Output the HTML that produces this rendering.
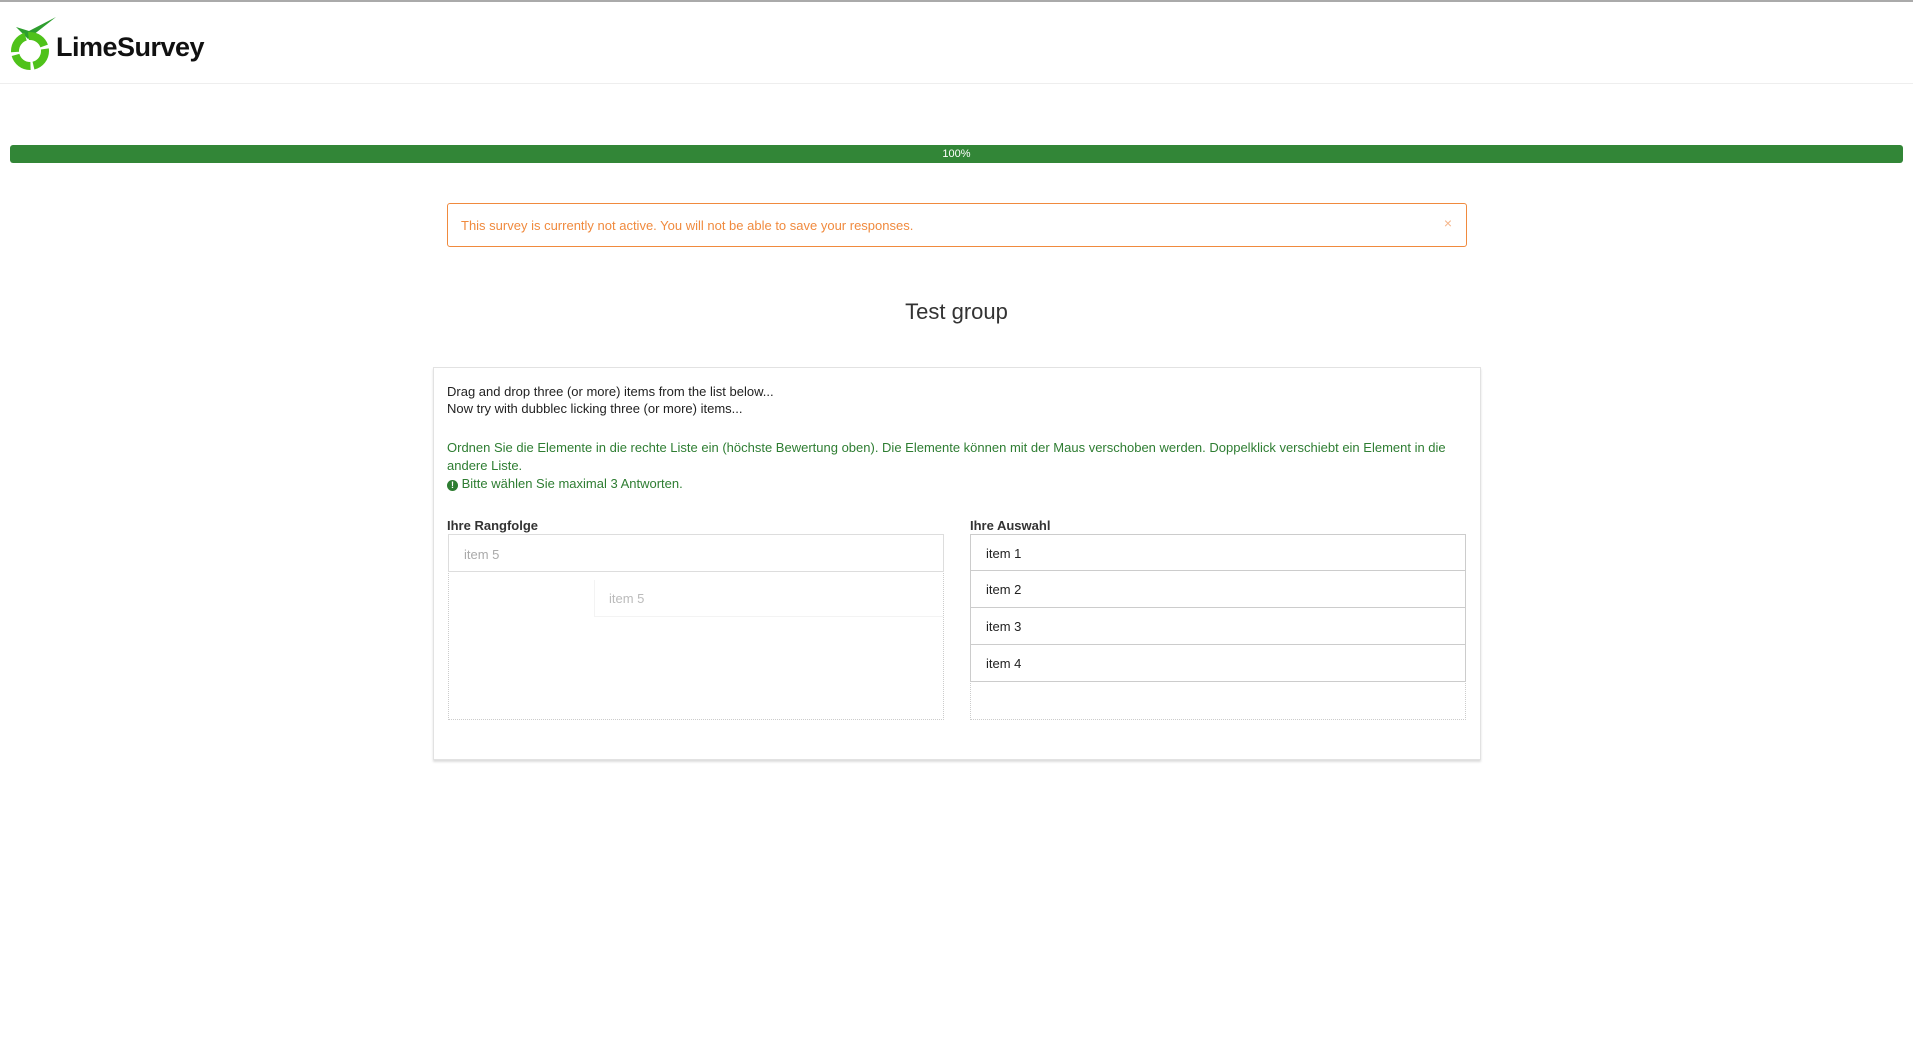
<!DOCTYPE html>
<html><head><meta charset="utf-8"><style>
*{box-sizing:border-box;margin:0;padding:0}
body{width:1913px;height:1041px;background:#fff;font-family:"Liberation Sans",sans-serif;position:relative;overflow:hidden;color:#333}
.abs{position:absolute}
</style></head><body>
<div class="abs" style="left:0;top:0;width:1913px;height:2px;background:#aaa"></div>
<div class="abs" style="left:0;top:83px;width:1913px;height:1px;background:#eee"></div>
<svg class="abs" style="left:8px;top:15px" width="52" height="56" viewBox="0 0 52 56">
<path d="M8 12 L20 24 L48 2 L21 16 Z" fill="#2e9e2e"/>
<circle cx="22" cy="36" r="15" fill="none" stroke="#4fc21a" stroke-width="8" stroke-dasharray="20 3"/>
</svg>
<div class="abs" style="left:56px;top:32px;font-size:27px;color:#111;font-weight:bold;letter-spacing:-0.5px">LimeSurvey</div>
<div class="abs" style="left:10px;top:145px;width:1893px;height:18px;background:#328637;border-radius:3px;color:#fff;font-size:11px;text-align:center;line-height:18px">100%</div>
<div class="abs" style="left:447px;top:203px;width:1020px;height:44px;border:1px solid #f08a3e;border-radius:3px;color:#f08a3e;font-size:13px;padding:14px 0 0 13px">This survey is currently not active. You will not be able to save your responses.<span style="position:absolute;right:14px;top:11px;color:#f5b58a;font-size:14px">×</span></div>
<div class="abs" style="left:0;width:1913px;top:299px;text-align:center;font-size:22px;color:#333">Test group</div>
<div class="abs" style="left:433px;top:367px;width:1048px;height:393px;border:1px solid #e2e2e2;box-shadow:0 2px 2px #ddd"></div>
<div class="abs" style="left:447px;top:383px;font-size:13px;line-height:17px;color:#222">Drag and drop three (or more) items from the list below...<br>Now try with dubblec licking three (or more) items...</div>
<div class="abs" style="left:447px;top:439px;width:1020px;font-size:13px;line-height:18px;color:#2e7d32">Ordnen Sie die Elemente in die rechte Liste ein (höchste Bewertung oben). Die Elemente können mit der Maus verschoben werden. Doppelklick verschiebt ein Element in die andere Liste.<br><span style="display:inline-block;width:11px;height:11px;border-radius:50%;background:#2e7d32;color:#fff;font-size:9px;text-align:center;line-height:11px;font-weight:bold">!</span> Bitte wählen Sie maximal 3 Antworten.</div>
<div class="abs" style="left:447px;top:518px;font-size:13px;font-weight:bold;color:#333">Ihre Rangfolge</div>
<div class="abs" style="left:970px;top:518px;font-size:13px;font-weight:bold;color:#333">Ihre Auswahl</div>
<div class="abs" style="left:448px;top:534px;width:496px;height:186px;border:1px dotted #ccc"></div>
<div class="abs" style="left:448px;top:534px;width:496px;height:38px;border:1px solid #ddd;color:#aaa;font-size:13px;padding:12px 15px">item 5</div>
<div class="abs" style="left:594px;top:580px;width:349px;height:37px;border-left:1px solid #f3f3f3;border-bottom:1px solid #f3f3f3;color:#bbb;font-size:13px;padding:11px 14px">item 5</div>
<div class="abs" style="left:970px;top:534px;width:496px;height:186px;border:1px dotted #ccc"></div>
<div class="abs" style="left:970px;top:534px;width:496px">
<div style="height:37px;border:1px solid #ccc;font-size:13px;padding:11px 15px;color:#222">item 1</div>
<div style="height:37px;border:1px solid #ccc;border-top:none;font-size:13px;padding:11px 15px;color:#222">item 2</div>
<div style="height:37px;border:1px solid #ccc;border-top:none;font-size:13px;padding:11px 15px;color:#222">item 3</div>
<div style="height:37px;border:1px solid #ccc;border-top:none;font-size:13px;padding:11px 15px;color:#222">item 4</div>
</div>
</body></html>
